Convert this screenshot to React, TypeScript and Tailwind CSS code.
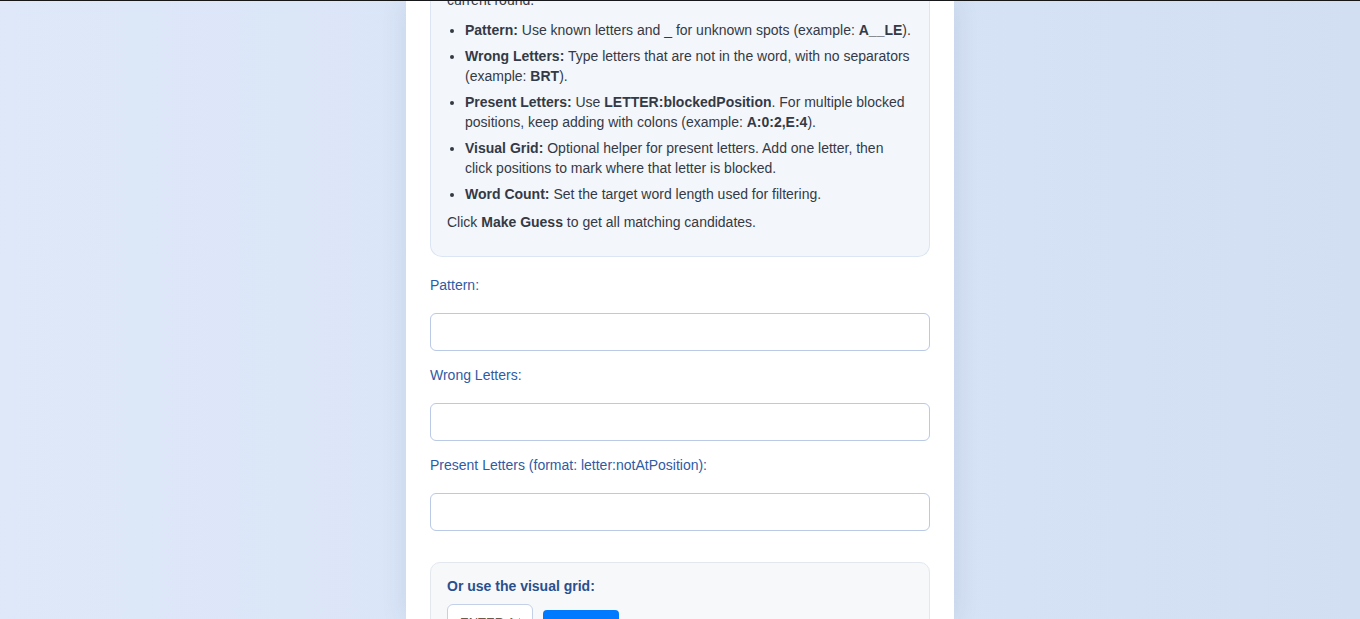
export default function App() {
  const fields = [
    "Pattern:",
    "Wrong Letters:",
    "Present Letters (format: letter:notAtPosition):",
  ];

  return (
    <div className="h-[619px] overflow-hidden bg-gradient-to-r from-[#dee8f9] to-[#d2dff3] font-['Liberation_Sans',Arial,sans-serif]">
      <div className="h-px bg-[#161616]" />
      <div className="mx-auto w-[548px] h-full overflow-hidden bg-white px-6 shadow-[0_0_24px_rgba(40,70,120,0.12)]">
        {/* help box */}
        <div className="-mt-[11px] rounded-b-xl border border-t-0 border-[#dbe5f4] bg-[#f3f6fb] px-4 pb-6 text-sm leading-5 text-[#333a45]">
          <p>current round.</p>
          <ul className="mt-[10px] list-disc space-y-1.5 pl-[18px]">
            <li>
              <b>Pattern:</b> Use known letters and _ for unknown spots (example: <b>A__LE</b>).
            </li>
            <li>
              <b>Wrong Letters:</b> Type letters that are not in the word, with no separators (example: <b>BRT</b>).
            </li>
            <li>
              <b>Present Letters:</b> Use <b>LETTER:blockedPosition</b>. For multiple blocked positions, keep adding with colons (example: <b>A:0:2,E:4</b>).
            </li>
            <li>
              <b>Visual Grid:</b> Optional helper for present letters. Add one letter, then click positions to mark where that letter is blocked.
            </li>
            <li>
              <b>Word Count:</b> Set the target word length used for filtering.
            </li>
          </ul>
          <p className="mt-[8px]">
            Click <b>Make Guess</b> to get all matching candidates.
          </p>
        </div>

        {/* fields */}
        <div className="mt-[18px]">
          {fields.map((label) => (
            <div key={label} className="pb-[14px]">
              <label className="block text-sm leading-5 text-[#2f5ba3]">{label}</label>
              <input
                type="text"
                className="mt-[18px] block h-[38px] w-full rounded-md border border-[#b9c9e6] bg-white px-3 text-sm outline-none"
              />
            </div>
          ))}
        </div>

        {/* visual grid */}
        <div className="mt-[17px] rounded-[10px] border border-[#e3e8ef] bg-[#f6f8fa] px-4 pt-[13px] pb-4">
          <h3 className="text-sm font-bold leading-5 text-[#2a4f8f]">Or use the visual grid:</h3>
          <div className="mt-2 flex items-start gap-[10px]">
            <input
              type="text"
              placeholder="ENTER A LETTER"
              className="w-[86px] rounded-md border border-[#c3d0e8] bg-white px-3 py-[10px] text-[13px] leading-4 uppercase text-[#555] placeholder:text-[#6b5a4a] outline-none"
            />
            <button className="mt-[6px] h-[36px] w-[76px] rounded-[4px] bg-[#007bff] text-sm font-medium text-white">
              Add
            </button>
          </div>
        </div>
      </div>
    </div>
  );
}
